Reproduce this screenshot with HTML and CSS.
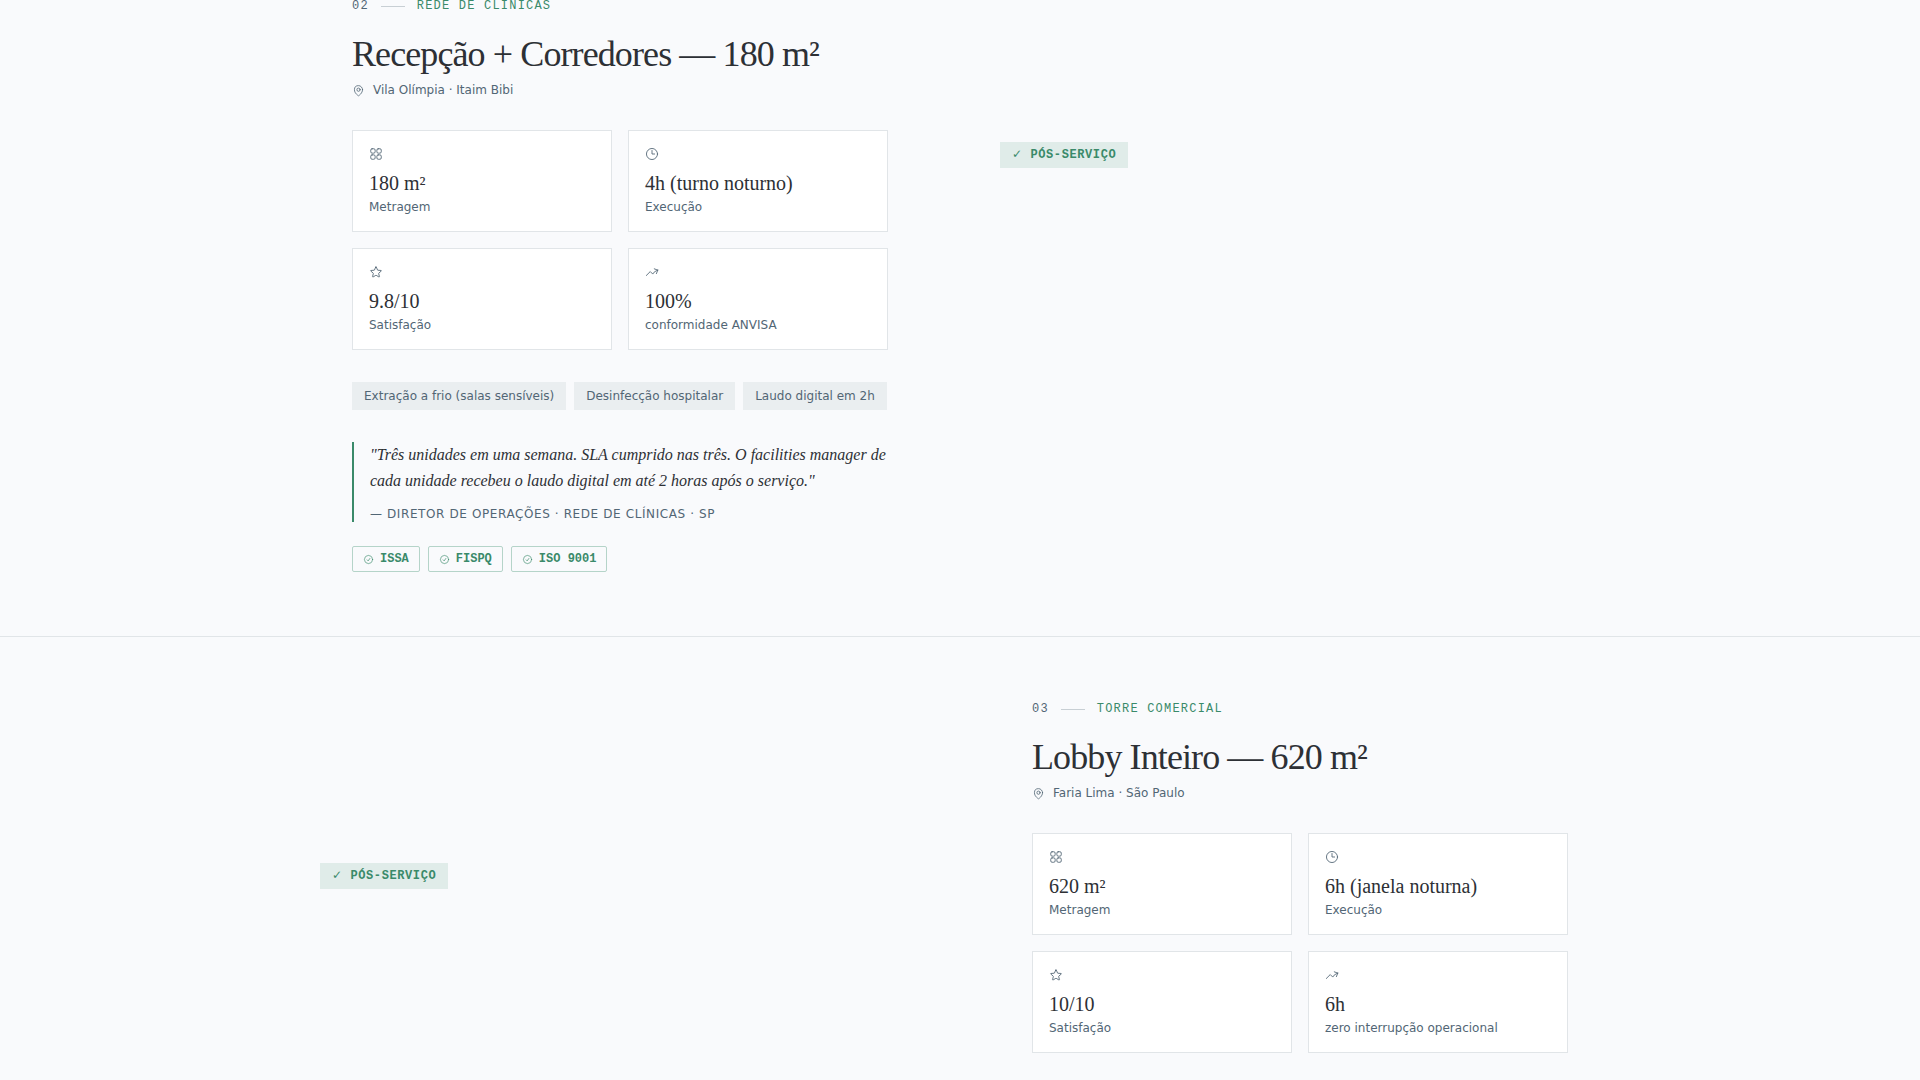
FILE: index.html
```html
<!DOCTYPE html>
<html lang="pt-BR">

<head>
    <meta charset="UTF-8">
    <meta name="viewport" content="width=device-width, initial-scale=1">
    <title>Casos</title>
    <link rel="stylesheet" href="styles.css">
</head>

<body>
    <svg class="sprite" aria-hidden="true">
        <symbol id="pin" viewBox="0 0 24 24">
            <path d="M15 10.5a3 3 0 11-6 0 3 3 0 016 0z" />
            <path d="M19.5 10.5c0 7.142-7.5 11.25-7.5 11.25S4.5 17.642 4.5 10.5a7.5 7.5 0 1115 0z" />
        </symbol>
        <symbol id="grid" viewBox="0 0 24 24">
            <rect x="3" y="3" width="7.5" height="7.5" rx="2.25" />
            <rect x="13.5" y="3" width="7.5" height="7.5" rx="2.25" />
            <rect x="3" y="13.5" width="7.5" height="7.5" rx="2.25" />
            <rect x="13.5" y="13.5" width="7.5" height="7.5" rx="2.25" />
        </symbol>
        <symbol id="clock" viewBox="0 0 24 24">
            <path d="M12 6v6h4.5m5 0a9.500 9.500 0 11-19 0 9.500 9.500 0 0119 0z" />
        </symbol>
        <symbol id="star" viewBox="0 0 24 24">
            <path d="M11.48 3.499a.562.562 0 011.04 0l2.125 5.111a.563.563 0 00.475.345l5.518.442c.499.04.701.663.321.988l-4.204 3.602a.563.563 0 00-.182.557l1.285 5.385a.562.562 0 01-.84.61l-4.725-2.885a.563.563 0 00-.586 0L6.982 20.54a.562.562 0 01-.84-.61l1.285-5.386a.562.562 0 00-.182-.557l-4.204-3.602a.563.563 0 01.321-.988l5.518-.442a.563.563 0 00.475-.345L11.48 3.5z" />
        </symbol>
        <symbol id="trend" viewBox="0 0 24 24">
            <path d="M2.25 18L9 11.25l4.306 4.307a11.95 11.95 0 015.814-5.519l2.74-1.22m0 0l-5.94-2.28m5.94 2.28l-2.28 5.941" />
        </symbol>
        <symbol id="check" viewBox="0 0 24 24">
            <path d="M9 12.75L11.25 15 15 9.75M21 12c0 1.268-.63 2.39-1.593 3.068a3.745 3.745 0 01-1.043 3.296 3.745 3.745 0 01-3.296 1.043A3.745 3.745 0 0112 21c-1.268 0-2.39-.63-3.068-1.593a3.746 3.746 0 01-3.296-1.043 3.745 3.745 0 01-1.043-3.296A3.745 3.745 0 013 12c0-1.268.63-2.39 1.593-3.068a3.745 3.745 0 011.043-3.296 3.746 3.746 0 013.296-1.043A3.746 3.746 0 0112 3c1.268 0 2.39.63 3.068 1.593a3.746 3.746 0 013.296 1.043 3.746 3.746 0 011.043 3.296A3.745 3.745 0 0121 12z" />
        </symbol>
    </svg>

    <main>
        <section class="case">
            <div class="case-grid">
                <div class="case-content">
                    <div class="eyebrow"><span>02</span><span class="line"></span><span class="sector">REDE DE CLÍNICAS</span></div>
                    <h2>Recepção + Corredores — 180 m²</h2>
                    <p class="location"><svg class="icon"><use href="#pin" /></svg>Vila Olímpia · Itaim Bibi</p>

                    <div class="metrics">
                        <div class="metric">
                            <svg class="icon"><use href="#grid" /></svg>
                            <p class="value">180 m²</p>
                            <p class="label">Metragem</p>
                        </div>
                        <div class="metric">
                            <svg class="icon"><use href="#clock" /></svg>
                            <p class="value">4h (turno noturno)</p>
                            <p class="label">Execução</p>
                        </div>
                        <div class="metric">
                            <svg class="icon"><use href="#star" /></svg>
                            <p class="value">9.8/10</p>
                            <p class="label">Satisfação</p>
                        </div>
                        <div class="metric">
                            <svg class="icon"><use href="#trend" /></svg>
                            <p class="value">100%</p>
                            <p class="label">conformidade ANVISA</p>
                        </div>
                    </div>

                    <div class="tags">
                        <span class="tag">Extração a frio (salas sensíveis)</span>
                        <span class="tag">Desinfecção hospitalar</span>
                        <span class="tag">Laudo digital em 2h</span>
                    </div>

                    <blockquote>
                        <p>"Três unidades em uma semana. SLA cumprido nas três. O facilities manager de cada unidade recebeu o laudo digital em até 2 horas após o serviço."</p>
                        <footer>— DIRETOR DE OPERAÇÕES · REDE DE CLÍNICAS · SP</footer>
                    </blockquote>

                    <div class="certs">
                        <span class="cert"><svg class="icon"><use href="#check" /></svg>ISSA</span>
                        <span class="cert"><svg class="icon"><use href="#check" /></svg>FISPQ</span>
                        <span class="cert"><svg class="icon"><use href="#check" /></svg>ISO 9001</span>
                    </div>
                </div>
                <div class="case-media">
                    <span class="badge">✓ PÓS-SERVIÇO</span>
                </div>
            </div>
        </section>

        <section class="case">
            <div class="case-grid case-tall">
                <div class="case-media">
                    <span class="badge">✓ PÓS-SERVIÇO</span>
                </div>
                <div class="case-content">
                    <div class="eyebrow"><span>03</span><span class="line"></span><span class="sector">TORRE COMERCIAL</span></div>
                    <h2>Lobby Inteiro — 620 m²</h2>
                    <p class="location"><svg class="icon"><use href="#pin" /></svg>Faria Lima · São Paulo</p>

                    <div class="metrics">
                        <div class="metric">
                            <svg class="icon"><use href="#grid" /></svg>
                            <p class="value">620 m²</p>
                            <p class="label">Metragem</p>
                        </div>
                        <div class="metric">
                            <svg class="icon"><use href="#clock" /></svg>
                            <p class="value">6h (janela noturna)</p>
                            <p class="label">Execução</p>
                        </div>
                        <div class="metric">
                            <svg class="icon"><use href="#star" /></svg>
                            <p class="value">10/10</p>
                            <p class="label">Satisfação</p>
                        </div>
                        <div class="metric">
                            <svg class="icon"><use href="#trend" /></svg>
                            <p class="value">6h</p>
                            <p class="label">zero interrupção operacional</p>
                        </div>
                    </div>
                </div>
            </div>
        </section>
    </main>
</body>

</html>
```

FILE: styles.css
```css
* {
    box-sizing: border-box;
    margin: 0;
    padding: 0;
}

body {
    height: 100vh;
    overflow: hidden;
    background: #f9fafc;
    color: #2d3035;
    font-family: "DejaVu Sans", sans-serif;
    font-size: 12px;
    line-height: 16px;
}

/* the list is scrolled just past the padding of the first case */
main {
    margin-top: -66px;
}

.sprite {
    display: none;
}

.icon {
    display: block;
    flex: none;
    width: 14px;
    height: 14px;
    fill: none;
    stroke: #526675;
    stroke-width: 1.5;
    stroke-linecap: round;
    stroke-linejoin: round;
}

.case {
    padding: 64px 32px;
    border-bottom: 1px solid #e1e5e8;
}

.case-grid {
    display: grid;
    grid-template-columns: 1fr 1fr;
    gap: 80px;
    align-items: center;
    max-width: 1280px;
    margin: 0 auto;
}

.case-tall {
    min-height: 610px;
}

.case-content {
    align-self: start;
    padding: 0 32px;
}

.case-media {
    min-height: 286px;
}

.badge {
    display: inline-block;
    padding: 4px 12px;
    background: #e0ece9;
    color: #3a8a6a;
    font-family: "Liberation Mono", "DejaVu Sans", monospace;
    font-weight: bold;
    line-height: 18px;
    letter-spacing: 0.05em;
}

.eyebrow {
    display: flex;
    align-items: center;
    gap: 12px;
    margin-bottom: 20px;
    color: #526675;
    font-family: "Liberation Mono", monospace;
    letter-spacing: 0.1em;
}

.line {
    width: 24px;
    height: 1px;
    background: #c8cfd4;
}

.sector {
    color: #3a8a6a;
}

h2 {
    margin-bottom: 8px;
    font-family: "Liberation Serif", serif;
    font-size: 36px;
    font-weight: normal;
    line-height: 40px;
    letter-spacing: -0.025em;
}

.location {
    display: flex;
    align-items: center;
    gap: 8px;
    margin-bottom: 32px;
    color: #526675;
}

.location .icon {
    width: 13px;
    height: 13px;
}

.metrics {
    display: grid;
    grid-template-columns: 1fr 1fr;
    gap: 16px;
    margin-bottom: 32px;
}

.metric {
    padding: 16px;
    background: #fff;
    border: 1px solid #e1e5e8;
}

.metric .icon {
    margin-bottom: 8px;
}

.value {
    margin-bottom: 2px;
    font-family: "Liberation Serif", serif;
    font-size: 20px;
    line-height: 28px;
}

.label {
    color: #526675;
}

.tags,
.certs {
    display: flex;
    flex-wrap: wrap;
    gap: 8px;
}

.tag {
    padding: 6px 12px;
    background: #eaeef0;
    color: #526675;
}

blockquote {
    margin: 32px 0 24px;
    padding-left: 16px;
    border-left: 2px solid #3a8a6a;
}

blockquote p {
    margin-bottom: 12px;
    font-family: "Liberation Serif", serif;
    font-size: 16px;
    font-style: italic;
    line-height: 26px;
}

blockquote footer {
    color: #526675;
    letter-spacing: 0.05em;
}

.cert {
    display: flex;
    align-items: center;
    gap: 6px;
    padding: 4px 10px;
    border: 1px solid #b5d4c9;
    border-radius: 2px;
    color: #3a8a6a;
    font-family: "Liberation Mono", monospace;
    font-weight: bold;
}

.cert .icon {
    width: 11px;
    height: 11px;
    stroke: #3a8a6a;
}
```
